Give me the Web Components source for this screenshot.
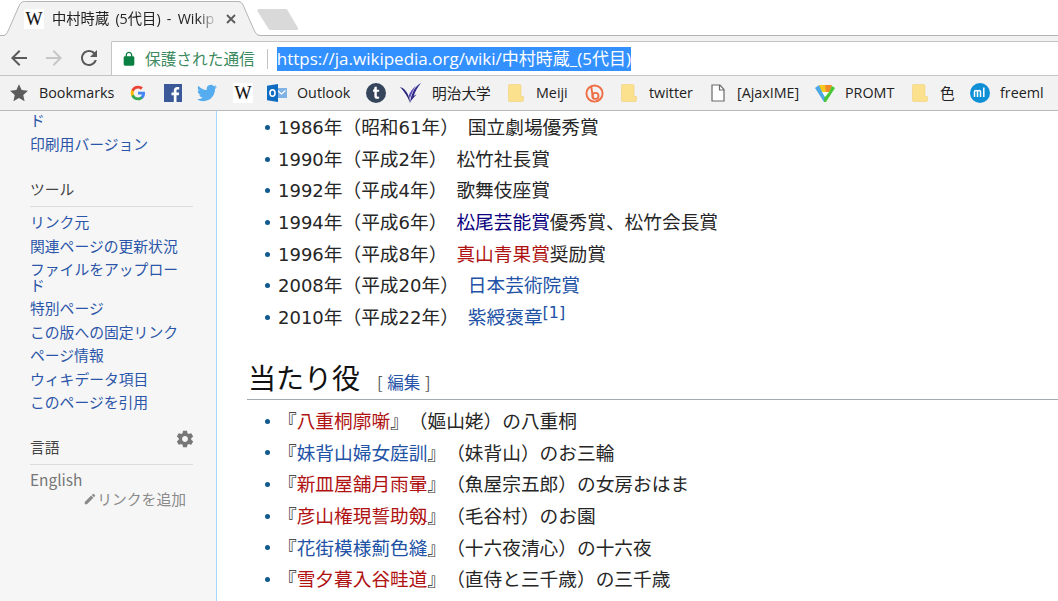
<!DOCTYPE html>
<html lang="ja">
  <head>
    <meta charset="utf-8" />
    <title>中村時蔵 (5代目) - Wikipedia</title>
    <style>
      html, body { margin: 0; height: 100%; overflow: hidden; background: #fff; }
      body { font-family: "Noto Sans CJK JP", sans-serif; text-spacing-trim: space-all; }
      wiki-link sup { font-family: "DejaVu Sans", sans-serif; font-size: 16px; line-height: 0; vertical-align: 6px; }
    </style>
  </head>
  <body>
    <browser-tabstrip></browser-tabstrip>
    <browser-toolbar></browser-toolbar>
    <bookmark-bar>
      <bm-item w="121" label="Bookmarks">
        <svg viewBox="0 0 24 24" width="20" height="20"><path fill="#5b5b5b" d="M12 1.5l3.2 7 7.6.8-5.7 5.1 1.6 7.5L12 18.1l-6.7 3.8 1.6-7.5L1.200 9.300l7.600-.8z"/></svg>
      </bm-item>
      <bm-item w="34">
        <svg viewBox="0 0 24 24" width="16" height="16">
          <path fill="#4285F4" d="M22.56 12.25c0-.78-.07-1.53-.2-2.25H12v4.26h5.92c-.26 1.37-1.04 2.530-2.21 3.31v2.77h3.57c2.080-1.92 3.280-4.74 3.280-8.090z"/>
          <path fill="#34A853" d="M12 23c2.970 0 5.460-.98 7.280-2.660l-3.570-2.770c-.98.66-2.230 1.060-3.710 1.060-2.860 0-5.290-1.930-6.160-4.530H2.180v2.840C3.990 20.530 7.700 23 12 23z"/>
          <path fill="#FBBC05" d="M5.840 14.090c-.22-.66-.35-1.360-.35-2.090s.13-1.430.35-2.090V7.070H2.180C1.430 8.550 1 10.220 1 12s.43 3.450 1.180 4.930l2.850-2.220.81-.62z"/>
          <path fill="#EA4335" d="M12 5.380c1.620 0 3.060.56 4.210 1.640l3.150-3.150C17.450 2.090 14.970 1 12 1 7.700 1 3.990 3.470 2.180 7.070l3.660 2.840c.87-2.600 3.300-4.530 6.160-4.530z"/>
        </svg>
      </bm-item>
      <bm-item w="33">
        <svg viewBox="0 0 18 18" width="18" height="18"><rect width="18" height="18" fill="#3b5998"/><path fill="#fff" d="M12.500 18v-6.800h2.300l.35-2.700H12.500V6.900c0-.8.2-1.300 1.300-1.300h1.400V3.200c-.25 0-1.100-.1-2-.1-2 0-3.400 1.200-3.400 3.500v1.900H7.500v2.700h2.300V18z"/></svg>
      </bm-item>
      <bm-item w="36">
        <svg viewBox="0 0 24 24" width="20" height="20"><path fill="#55acee" d="M23.953 4.570a10 10 0 01-2.825.775 4.958 4.958 0 002.163-2.723c-.951.555-2.005.959-3.127 1.184a4.920 4.920 0 00-8.384 4.482C7.690 8.095 4.067 6.130 1.640 3.162a4.822 4.822 0 00-.666 2.475c0 1.710.870 3.213 2.188 4.096a4.904 4.904 0 01-2.228-.616v.060a4.923 4.923 0 003.946 4.827 4.996 4.996 0 01-2.212.085 4.936 4.936 0 004.604 3.417 9.867 9.867 0 01-6.102 2.105c-.390 0-.779-.023-1.170-.067a13.995 13.995 0 007.557 2.209c9.053 0 13.998-7.496 13.998-13.985 0-.210 0-.420-.015-.630A9.935 9.935 0 0024 4.590z"/></svg>
      </bm-item>
      <bm-item w="34"><wiki-mark></wiki-mark></bm-item>
      <bm-item w="99" label="Outlook">
        <svg viewBox="0 0 20 18" width="20" height="18"><path fill="#7fb2e5" d="M8 4h12v10H8z"/><path fill="none" stroke="#fff" stroke-width="1.200" d="M10.500 6.500l4 3.500 4-3.500"/><path fill="#0f6cc0" d="M0 1.800L11 0v18L0 16.200z"/><ellipse cx="5.500" cy="9" rx="2.500" ry="3.300" fill="none" stroke="#fff" stroke-width="1.600"/></svg>
      </bm-item>
      <bm-item w="34">
        <svg viewBox="0 0 20 20" width="20" height="20"><circle cx="10" cy="10" r="10" fill="#35465c"/><path fill="#fff" d="M8.600 3.800h2.200v2.900h2.300v2h-2.300v4c0 1 .9 1.200 2.300.7v2c-2.600.9-4.700.2-4.700-2.200V8.700H7V7.100c1-.4 1.400-1.600 1.600-3.300z"/></svg>
      </bm-item>
      <bm-item w="108" label="明治大学">
        <svg viewBox="0 0 21 20" width="21" height="20" style="margin-right:1px"><path fill="#25247a" d="M0 4c4 1 7.500 5 9.500 11.500L10 20C7.500 13 4 8 0 4z"/><path fill="#2f2a88" d="M21 0c-5.500 3-9.500 9-11 20 1.500-3.500 4-6 6.500-8.500-.8.2-1.800.7-2.800 1.500C15 8.500 18 4 21 0z"/><path fill="#5a4db5" d="M16 3c-3 2-5.500 5.500-7.300 9.500l1.200 3C11.500 10.500 13.500 6.500 16 3z"/></svg>
      </bm-item>
      <bm-item w="77" label="Meiji"><bm-folder></bm-folder></bm-item>
      <bm-item w="36">
        <svg viewBox="0 0 20 20" width="19" height="19"><circle cx="10" cy="10" r="8.500" fill="none" stroke="#ee6e45" stroke-width="2"/><path fill="none" stroke="#ee6e45" stroke-width="2" d="M6.500 2.500L8.500 15"/><circle cx="11" cy="12.500" r="3.200" fill="none" stroke="#ee6e45" stroke-width="2"/></svg>
      </bm-item>
      <bm-item w="90" label="twitter"><bm-folder></bm-folder></bm-item>
      <bm-item w="104" label="[AjaxIME]">
        <svg viewBox="0 0 14 18" width="14" height="18" style="margin-right:2px"><path fill="#fff" stroke="#6a6a6a" stroke-width="1.200" d="M1 1h8l4 4.500V17H1z"/><path fill="none" stroke="#6a6a6a" stroke-width="1.200" d="M8.500 1v5H13"/></svg>
      </bm-item>
      <bm-item w="97" label="PROMT">
        <svg viewBox="0 0 20 20" width="20" height="20"><path fill="#4da9e6" d="M0 5l4-3 5 7 2 10h-2z"/><path fill="#46c837" d="M20 5l-3-2-7 7-1 9h2z"/><path fill="#f7c71d" d="M4 2h13l-3 7H7z"/><path fill="#f08a2a" d="M10 2h7l-3 7h-3z"/><path fill="#fff" d="M7 9h7l-4 5z"/></svg>
      </bm-item>
      <bm-item w="58" label="色"><bm-folder></bm-folder></bm-item>
      <bm-item w="88" label="freeml">
        <svg viewBox="0 0 20 20" width="20" height="20"><circle cx="10" cy="10" r="10" fill="#0f8fd6"/><path fill="none" stroke="#fff" stroke-width="1.500" d="M4.500 14V8.500c0-1.500 3-1.500 3 0V14m0-5.500c0-1.500 3-1.500 3 0V14M13.800 4.500V14"/></svg>
      </bm-item>
    </bookmark-bar>
    <wiki-page>
      <wiki-sidebar slot="side">
        <side-link>ド</side-link>
        <side-link>印刷用バージョン</side-link>
        <side-portal title="ツール">
          <side-link>リンク元</side-link>
          <side-link>関連ページの更新状況</side-link>
          <side-link>ファイルをアップロード</side-link>
          <side-link>特別ページ</side-link>
          <side-link>この版への固定リンク</side-link>
          <side-link>ページ情報</side-link>
          <side-link>ウィキデータ項目</side-link>
          <side-link>このページを引用</side-link>
        </side-portal>
        <lang-portal></lang-portal>
      </wiki-sidebar>
      <wiki-list>
        <award-row year="1986" era="昭和" num="61">国立劇場優秀賞</award-row>
        <award-row year="1990" era="平成" num="2">松竹社長賞</award-row>
        <award-row year="1992" era="平成" num="4">歌舞伎座賞</award-row>
        <award-row year="1994" era="平成" num="6"><wiki-link kind="visited">松尾芸能賞</wiki-link>優秀賞、松竹会長賞</award-row>
        <award-row year="1996" era="平成" num="8"><wiki-link kind="red">真山青果賞</wiki-link>奨励賞</award-row>
        <award-row year="2008" era="平成" num="20"><wiki-link>日本芸術院賞</wiki-link></award-row>
        <award-row year="2010" era="平成" num="22"><wiki-link>紫綬褒章</wiki-link><wiki-link><sup>[1]</sup></wiki-link></award-row>
      </wiki-list>
      <wiki-heading>当たり役</wiki-heading>
      <wiki-list>
        <role-row>『<wiki-link kind="red">八重桐廓噺</wiki-link>』（嫗山姥）の八重桐</role-row>
        <role-row>『<wiki-link>妹背山婦女庭訓</wiki-link>』（妹背山）のお三輪</role-row>
        <role-row>『<wiki-link kind="red">新皿屋舗月雨暈</wiki-link>』（魚屋宗五郎）の女房おはま</role-row>
        <role-row>『<wiki-link kind="red">彦山権現誓助剱</wiki-link>』（毛谷村）のお園</role-row>
        <role-row>『<wiki-link>花街模様薊色縫</wiki-link>』（十六夜清心）の十六夜</role-row>
        <role-row>『<wiki-link kind="red">雪夕暮入谷畦道</wiki-link>』（直侍と三千歳）の三千歳</role-row>
      </wiki-list>
    </wiki-page>

    <script>
      // every element gets its markup and styles the same way
      function define(name, markup, setup) {
        customElements.define(
          name,
          class extends HTMLElement {
            constructor() {
              super();
              this.attachShadow({ mode: 'open' }).innerHTML = markup;
            }
            connectedCallback() {
              if (setup) setup(this, this.shadowRoot);
            }
          }
        );
      }

      const latin = '"Open Sans", "Noto Sans CJK JP", sans-serif';

      define('wiki-mark', `
        <style>
          :host { display: inline-flex; width: 20px; height: 20px; background: #fff; align-items: center; justify-content: center; }
          span { font: 18px/20px "Liberation Serif", serif; color: #111; -webkit-text-stroke: .15px #111; }
        </style>
        <span>W</span>`);

      define('browser-tabstrip', `
        <style>
          :host { display: flex; height: 36px; background: #fff; box-sizing: border-box; border-bottom: 1px solid #b4b4b4; }
          .tab { position: relative; flex: none; width: 260px; height: 37px; display: flex; align-items: center; padding: 0 0 0 24px; box-sizing: border-box; }
          .tab > svg { position: absolute; left: 0; top: 0; }
          wiki-mark, .title, .close { position: relative; }
          .title {
            margin-left: 8px; width: 166px; white-space: nowrap; overflow: hidden;
            font: 14.300px/20px ${latin}; word-spacing: 2.500px; color: #222;
            -webkit-mask-image: linear-gradient(to right, #000 88%, rgba(0,0,0,.25) 97%);
          }
          .close { margin-left: 8px; display: flex; }
          .new { margin: 9px 0 0 -4px; }
        </style>
        <div class="tab">
          <svg width="260" height="37"><path d="M0 35.500h3C6 35.500 7 33 8.500 30L19 6c1-2.500 2.500-4.500 5.500-4.500H238c3 0 4.500 2 5.500 4.500L254 30c1.500 3 3 5.500 6 5.500V37H0z" fill="#f2f2f2"/><path d="M0 35.500h3C6 35.500 7 33 8.500 30L19 6c1-2.500 2.500-4.500 5.500-4.500H238c3 0 4.500 2 5.500 4.500L254 30c1.500 3 3 5.500 6 5.500" fill="none" stroke="#b4b4b4"/></svg>
          <wiki-mark></wiki-mark>
          <span class="title">中村時蔵 (5代目) - Wikip</span>
          <span class="close"><svg width="10" height="10"><path d="M1 1l8 8M9 1l-8 8" stroke="#5a5a5a" stroke-width="1.800"/></svg></span>
        </div>
        <svg class="new" width="43" height="21"><path d="M3 0h26c1.500 0 2.500.5 3 2l10 17c.5 1 0 2-1.500 2H15c-1.500 0-2.500-.5-3-2L2 3C1 1.500 1.500 0 3 0z" fill="#d9d9d9"/></svg>`);

      define('browser-toolbar', `
        <style>
          :host { display: flex; height: 40px; background: #f2f2f2; padding-top: 5px; box-sizing: border-box; border-bottom: 1px solid #c4c4c4; }
          .nav { flex: none; display: flex; width: 111px; padding-left: 7px; gap: 11px; box-sizing: border-box; align-items: center; }
          .nav svg { flex: none; }
          .omni { flex: 1; display: flex; align-items: center; background: #fff; border: 1px solid #c4c4c4; border-right: 0; border-bottom: 0; border-radius: 2px 0 0 0; padding-left: 9px; }
          .lock { flex: none; }
          .secure { margin-left: 8px; font: 15.700px/24px "Noto Sans CJK JP", sans-serif; color: #3d8a61; white-space: nowrap; }
          .sep { width: 1px; height: 20px; background: #c4c4c4; margin: 0 9px 0 12px; }
          .url { height: 24px; font: 17px/24px ${latin}; color: #fff; background: #3390ff; white-space: nowrap; }
        </style>
        <div class="nav">
          <svg viewBox="0 0 24 24" width="24" height="24"><path fill="#5a5a5a" d="M20 11H7.830l5.590-5.590L12 4l-8 8 8 8 1.410-1.410L7.830 13H20v-2z"/></svg>
          <svg viewBox="0 0 24 24" width="24" height="24"><path fill="#c6c6c6" d="M12 4l-1.410 1.410L16.170 11H4v2h12.170l-5.580 5.590L12 20l8-8z"/></svg>
          <svg viewBox="0 0 24 24" width="24" height="24"><path fill="#5a5a5a" d="M17.650 6.350C16.200 4.900 14.210 4 12 4c-4.420 0-7.990 3.580-7.990 8s3.570 8 7.990 8c3.730 0 6.840-2.550 7.730-6h-2.080c-.82 2.330-3.040 4-5.650 4-3.310 0-6-2.690-6-6s2.690-6 6-6c1.660 0 3.140.69 4.220 1.780L13 11h7V4l-2.350 2.350z"/></svg>
        </div>
        <div class="omni">
          <svg class="lock" viewBox="0 0 24 24" width="16" height="16"><path fill="#0b8043" d="M18 8h-1V6c0-2.760-2.240-5-5-5S7 3.240 7 6v2H6c-1.100 0-2 .9-2 2v10c0 1.100.9 2 2 2h12c1.100 0 2-.9 2-2V10c0-1.100-.9-2-2-2zM9 6c0-1.660 1.340-3 3-3s3 1.340 3 3v2H9V6z"/></svg>
          <span class="secure">保護された通信</span>
          <span class="sep"></span>
          <span class="url">https://ja.wikipedia.org/wiki/中村時蔵_(5代目)</span>
        </div>`);

      define('bookmark-bar', `
        <style>
          :host { display: flex; position: relative; z-index: 1; height: 35px; background: #f2f2f2; box-sizing: border-box; border-bottom: 1px solid #b9b9b9; padding-left: 9px; align-items: center; }
        </style>
        <slot></slot>`);

      define('bm-item', `
        <style>
          :host { display: flex; flex: none; align-items: center; gap: 10px; box-sizing: border-box; }
          span { font: 14.300px/20px ${latin}; color: #222; white-space: nowrap; }
          span.cjk { font-size: 14.700px; }
          ::slotted(*) { flex: none; }
        </style>
        <slot></slot><span></span>`, (el, root) => {
          el.style.width = el.getAttribute('w') + 'px';
          const label = el.getAttribute('label') || '';
          const span = root.querySelector('span');
          span.textContent = label;
          if (/[^\x00-\x7f]/.test(label)) span.className = 'cjk';
        });

      define('bm-folder', `
        <style>:host { display: flex; margin-right: 2px; }</style>
        <svg viewBox="0 0 16 18" width="16" height="18"><path fill="#fbe08d" stroke="#f0d27a" stroke-width=".6" d="M1.500.5h10c1 0 1.500.5 1.500 1.500v10.500h2.500V16c0 1-.5 1.500-1.500 1.500H1.500C.8 17.500.5 17 .5 16.500V1.500C.5 1 .8.500 1.500.5z"/></svg>`);

      define('wiki-page', `
        <style>
          :host { display: grid; grid-template-columns: 217px 1fr; grid-template-rows: 1fr; height: 490px; }
          .main { padding-left: 31px; margin-top: -1px; font: 18.700px/31.700px "Noto Sans CJK JP", sans-serif; color: #262626; }
        </style>
        <slot name="side"></slot>
        <div class="main"><slot></slot></div>`);

      define('wiki-sidebar', `
        <style>
          :host { display: block; background: #f6f6f6; border-right: 1px solid #a7d7f9; box-sizing: border-box; padding: 1px 23px 0 30px; height: 490px; }
          .in { margin-top: -4px; }
        </style>
        <div class="in"><slot></slot></div>`);

      define('side-link', `
        <style>
          :host { display: block; padding: 4px 8px 4px 0; font: 14.800px/15.500px "Noto Sans CJK JP", sans-serif; color: #2a55a8; }
        </style>
        <slot></slot>`);

      define('side-portal', `
        <style>
          :host { display: block; margin-top: 22px; }
          h3 { margin: 0 0 3px; padding: 0 0 5px; font: 400 14.800px/24px "Noto Sans CJK JP", sans-serif; color: #444; border-bottom: 1px solid #dcdcdc; }
        </style>
        <h3></h3>
        <slot></slot>`, (el, root) => {
          root.querySelector('h3').textContent = el.getAttribute('title');
        });

      define('lang-portal', `
        <style>
          :host { display: block; margin-top: 21px; position: relative; }
          h3 { margin: 0 0 3px; padding: 0 0 5px; font: 400 14.800px/24px "Noto Sans CJK JP", sans-serif; color: #444; border-bottom: 1px solid #dcdcdc; }
          .gear { position: absolute; right: -2px; top: -6px; }
          .en { font: 15.400px/23px "Noto Sans CJK JP", sans-serif; color: #777; }
          .add { display: flex; justify-content: flex-end; align-items: center; padding-right: 7px; font: 14.800px/16px "Noto Sans CJK JP", sans-serif; color: #8a8a8a; }
        </style>
        <h3>言語</h3>
        <svg class="gear" viewBox="0 0 24 24" width="20" height="20"><path fill="#777" d="M19.430 12.980c.04-.32.07-.64.07-.98s-.03-.66-.07-.98l2.110-1.650c.19-.15.24-.42.12-.64l-2-3.460c-.12-.22-.39-.3-.61-.22l-2.490 1c-.52-.4-1.080-.73-1.690-.98l-.38-2.650C14.460 2.180 14.250 2 14 2h-4c-.25 0-.46.18-.49.42l-.38 2.650c-.61.25-1.170.59-1.690.98l-2.490-1c-.23-.09-.49 0-.61.22l-2 3.460c-.13.22-.07.49.12.64l2.110 1.650c-.04.32-.07.65-.07.98s.03.66.07.98l-2.110 1.650c-.19.15-.24.42-.12.64l2 3.460c.12.22.39.3.61.22l2.490-1c.52.4 1.080.73 1.690.98l.38 2.650c.03.24.24.42.49.42h4c.25 0 .46-.18.49-.42l.38-2.650c.61-.25 1.170-.59 1.690-.98l2.490 1c.23.09.49 0 .61-.22l2-3.460c.12-.22.07-.49-.12-.64l-2.110-1.650zM12 15.500c-1.930 0-3.500-1.570-3.500-3.500s1.570-3.500 3.500-3.500 3.500 1.570 3.500 3.500-1.570 3.500-3.500 3.500z"/></svg>
        <div class="en">English</div>
        <div class="add"><svg viewBox="0 0 24 24" width="14" height="14"><path fill="#8a8a8a" d="M3 17.250V21h3.750L17.810 9.940l-3.750-3.750L3 17.250zM20.710 7.040c.39-.39.39-1.020 0-1.410l-2.340-2.340c-.39-.39-1.020-.39-1.410 0l-1.830 1.830 3.750 3.750 1.830-1.830z"/></svg>リンクを追加</div>`);

      define('wiki-list', `
        <style>:host { display: block; }</style>
        <slot></slot>`);

      // no whitespace around the slot: this one sits inline in running text
      define('wiki-link', `<style>
          :host { color: #2152a5; }
          :host([kind="red"]) { color: #b01212; }
          :host([kind="visited"]) { color: #0b0080; }
        </style><slot></slot>`);

      const rowStyle = `
        :host { display: flex; align-items: center; height: 31.700px; white-space: nowrap; }
        .dot { flex: none; width: 5px; height: 5px; border-radius: 50%; background: #0f5a8e; margin: 3px 8px 0 17px; }
        .n { font: 18px/1 "DejaVu Sans", sans-serif; }
        .gap { display: inline-block; width: 9px; }`;

      define('award-row', `
        <style>${rowStyle}</style>
        <span class="dot"></span>
        <span><span class="n y"></span>年（<span class="e"></span><span class="n m"></span>年）<span class="gap"></span><slot></slot></span>`, (el, root) => {
          root.querySelector('.y').textContent = el.getAttribute('year');
          root.querySelector('.e').textContent = el.getAttribute('era');
          root.querySelector('.m').textContent = el.getAttribute('num');
        });

      define('role-row', `
        <style>${rowStyle}</style>
        <span class="dot"></span>
        <span><slot></slot></span>`);

      define('wiki-heading', `
        <style>
          :host { display: flex; align-items: baseline; margin-left: -1px; height: 68px; box-sizing: border-box; padding: 25px 0 0 1px; margin-bottom: 4px; border-bottom: 1px solid #a2a9b1; }
          h2 { margin: 0; font: 400 28px/40px "Noto Sans CJK JP", sans-serif; color: #111; }
          .edit { margin-left: 17px; font: 16.500px/20px "Noto Sans CJK JP", sans-serif; color: #54595d; white-space: nowrap; }
          .edit span { color: #2a55a8; margin: 0 1px; }
        </style>
        <h2><slot></slot></h2>
        <span class="edit">[ <span>編集</span> ]</span>`);
    </script>
  </body>
</html>
